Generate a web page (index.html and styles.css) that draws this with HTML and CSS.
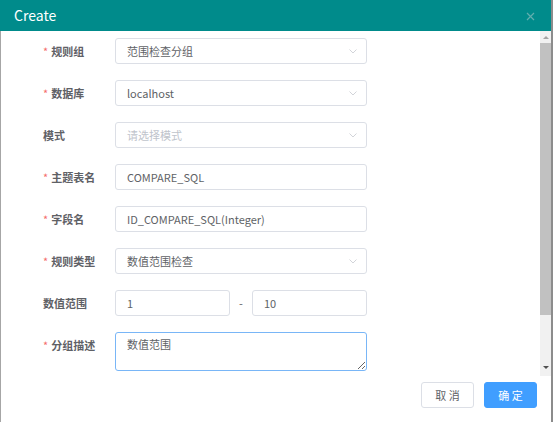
FILE: index.html
```html
<!DOCTYPE html>
<html lang="zh">
<head>
<meta charset="utf-8">
<title>Create</title>
<link rel="stylesheet" href="styles.css">
</head>
<body>
<div class="dialog">
  <header class="dialog-header">
    <span class="title">Create</span>
    <svg class="close" width="9" height="9" viewBox="0 0 9 9"><path d="M1 1L8 8M8 1L1 8" stroke="currentColor" stroke-width="1.2" fill="none"/></svg>
  </header>
  <div class="dialog-main">
    <div class="scroll-area">
      <form class="form">
        <div class="row">
          <label class="label required">规则组</label>
          <div class="control select"><span>范围检查分组</span><svg class="arrow" width="8" height="5" viewBox="0 0 8 5"><path d="M0.5 0.5L4 4L7.5 0.5" stroke="currentColor" stroke-width="0.8" fill="none"/></svg></div>
        </div>
        <div class="row">
          <label class="label required">数据库</label>
          <div class="control select"><span>localhost</span><svg class="arrow" width="8" height="5" viewBox="0 0 8 5"><path d="M0.5 0.5L4 4L7.5 0.5" stroke="currentColor" stroke-width="0.8" fill="none"/></svg></div>
        </div>
        <div class="row">
          <label class="label">模式</label>
          <div class="control select"><span class="placeholder">请选择模式</span><svg class="arrow" width="8" height="5" viewBox="0 0 8 5"><path d="M0.5 0.5L4 4L7.5 0.5" stroke="currentColor" stroke-width="0.8" fill="none"/></svg></div>
        </div>
        <div class="row">
          <label class="label required">主题表名</label>
          <div class="control"><span>COMPARE_SQL</span></div>
        </div>
        <div class="row">
          <label class="label required">字段名</label>
          <div class="control"><span>ID_COMPARE_SQL(Integer)</span></div>
        </div>
        <div class="row">
          <label class="label required">规则类型</label>
          <div class="control select"><span>数值范围检查</span><svg class="arrow" width="8" height="5" viewBox="0 0 8 5"><path d="M0.5 0.5L4 4L7.5 0.5" stroke="currentColor" stroke-width="0.8" fill="none"/></svg></div>
        </div>
        <div class="row">
          <label class="label">数值范围</label>
          <div class="range">
            <div class="control small"><span>1</span></div>
            <span class="sep">-</span>
            <div class="control small"><span>10</span></div>
          </div>
        </div>
        <div class="row">
          <label class="label required">分组描述</label>
          <textarea class="textarea">数值范围</textarea>
        </div>
      </form>
      <div class="scrollbar">
        <div class="sb-btn"><span class="tri-up"></span></div>
        <div class="sb-thumb"></div>
        <div class="sb-rest"></div>
        <div class="sb-btn bottom"><span class="tri-down"></span></div>
      </div>
    </div>
    <div class="footer">
      <button class="btn" type="button">取 消</button>
      <button class="btn primary" type="button">确 定</button>
    </div>
  </div>
</div>
</body>
</html>
```

FILE: styles.css
```css
* { box-sizing: border-box; }

html, body {
  margin: 0;
  padding: 0;
  background: #ffffff;
}

body {
  width: 553px;
  height: 422px;
  overflow: hidden;
  font-family: "Noto Sans CJK SC", "Noto Sans", sans-serif;
  color: #606266;
}

.dialog {
  width: 553px;
  height: 422px;
  display: flex;
  flex-direction: column;
  border-right: 2px solid #8c8c8c;
}

.dialog-header {
  height: 31px;
  flex: none;
  background: #008b8b;
  display: flex;
  align-items: center;
  justify-content: space-between;
  padding: 0 16px 2px 14px;
}

.title {
  color: #ffffff;
  font-size: 14px;
  line-height: 20px;
}

.close {
  color: #62aeae;
  margin-top: 4px;
}

.dialog-main {
  flex: 1;
  display: flex;
  flex-direction: column;
  border-left: 1px solid #a6a6a6;
  min-height: 0;
}

.scroll-area {
  height: 345px;
  flex: none;
  display: flex;
}

.form {
  flex: 1;
  margin: 0;
  padding: 7px 0 0 42px;
}

.row {
  display: flex;
  align-items: flex-start;
  margin-bottom: 16px;
}

.label {
  width: 72px;
  flex: none;
  font-size: 11px;
  line-height: 26px;
  font-weight: 700;
  color: #5f6166;
}

.label.required::before {
  content: "*";
  color: #f56c6c;
  font-weight: 400;
  margin-right: 3px;
}

.control {
  width: 252px;
  height: 26px;
  border: 1px solid #dcdfe6;
  border-radius: 3px;
  padding: 0 9px 0 11px;
  display: flex;
  align-items: center;
  justify-content: space-between;
  font-size: 11px;
  color: #606266;
  background: #ffffff;
}

.control.small {
  width: 115px;
}

.placeholder {
  color: #c0c4cc;
}

.arrow {
  color: #c6c9cf;
  flex: none;
}

.range {
  display: flex;
  align-items: center;
}

.sep {
  width: 22px;
  text-align: center;
  font-size: 11px;
  color: #606266;
}

.textarea {
  width: 252px;
  height: 39px;
  margin: 0;
  border: 1px solid #79b6f7;
  border-radius: 3px;
  padding: 3px 11px;
  font-family: inherit;
  font-size: 11px;
  line-height: 17px;
  color: #606266;
  resize: vertical;
  outline: none;
}

.scrollbar {
  width: 11px;
  flex: none;
  display: flex;
  flex-direction: column;
  background: #f1f1f1;
}

.sb-btn {
  height: 12px;
  flex: none;
  display: flex;
  align-items: center;
  justify-content: center;
}

.sb-btn.bottom {
  height: 14px;
  align-items: flex-start;
  padding-top: 4px;
}

.tri-up {
  width: 0;
  height: 0;
  border-left: 3px solid transparent;
  border-right: 3px solid transparent;
  border-bottom: 3px solid #a3a3a3;
}

.tri-down {
  width: 0;
  height: 0;
  border-left: 3px solid transparent;
  border-right: 3px solid transparent;
  border-top: 3px solid #505050;
}

.sb-thumb {
  height: 272px;
  flex: none;
  background: #c1c1c1;
}

.sb-rest {
  flex: 1;
}

.footer {
  flex: 1;
  display: flex;
  justify-content: flex-end;
  align-items: flex-start;
  gap: 10px;
  padding: 6px 14px 0 0;
}

.btn {
  width: 53px;
  height: 26px;
  border: 1px solid #dcdfe6;
  border-radius: 3px;
  background: #ffffff;
  color: #606266;
  font-family: inherit;
  font-size: 11px;
  padding: 0;
  margin: 0;
}

.btn.primary {
  background: #409eff;
  border-color: #409eff;
  color: #ffffff;
}
```
